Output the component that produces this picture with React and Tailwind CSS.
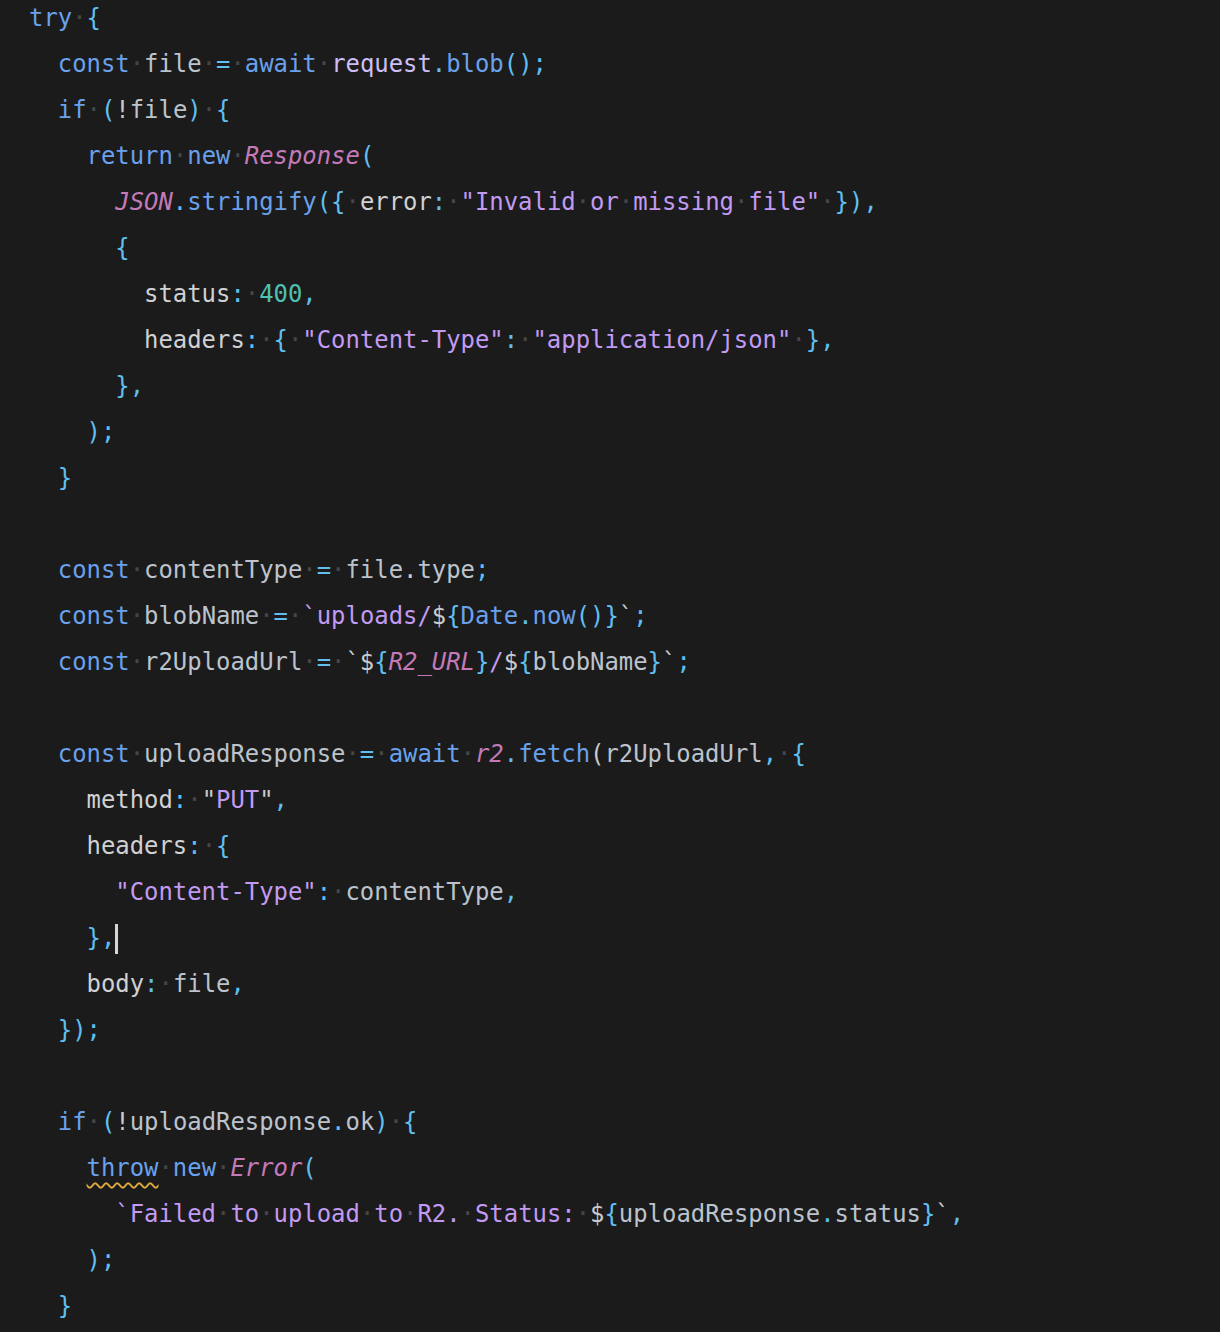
const C = {
  K: "text-[#6aa1ec]",
  P: "text-[#60bff0]",
  V: "text-[#bcc3cc]",
  R: "text-[#d0d1d3]",
  S: "text-[#c29af2]",
  T: "text-[#c47ab8] italic",
  N: "text-[#4fc1b1]",
  F: "text-[#6aa1ec]",
  L: "text-[#cdbff5]",
  W: "text-[#c9cbce]",
  Q: "text-[#6aa1ec] underline decoration-wavy decoration-[#dcaa3e] decoration-[1.5px] underline-offset-[6px]",
};

const _ = ["_", " "];

const LINES = [
  [0, [["K", "try"], _, ["P", "{"]]],
  [2, [["K", "const"], _, ["V", "file"], _, ["P", "="], _, ["K", "await"], _, ["L", "request"], ["P", "."], ["F", "blob"], ["P", "();"]]],
  [2, [["K", "if"], _, ["P", "("], ["W", "!"], ["V", "file"], ["P", ")"], _, ["P", "{"]]],
  [4, [["K", "return"], _, ["K", "new"], _, ["T", "Response"], ["P", "("]]],
  [6, [["T", "JSON"], ["P", "."], ["F", "stringify"], ["P", "({"], _, ["R", "error"], ["P", ":"], _, ["S", '"Invalid or missing file"'], _, ["P", "}),"]]],
  [6, [["P", "{"]]],
  [8, [["R", "status"], ["P", ":"], _, ["N", "400"], ["P", ","]]],
  [8, [["R", "headers"], ["P", ":"], _, ["P", "{"], _, ["S", '"Content-Type"'], ["P", ":"], _, ["S", '"application/json"'], _, ["P", "},"]]],
  [6, [["P", "},"]]],
  [4, [["P", ");"]]],
  [2, [["P", "}"]]],
  [0, []],
  [2, [["K", "const"], _, ["V", "contentType"], _, ["P", "="], _, ["V", "file"], ["W", "."], ["V", "type"], ["P", ";"]]],
  [2, [["K", "const"], _, ["V", "blobName"], _, ["P", "="], _, ["S", "`uploads/"], ["W", "$"], ["P", "{"], ["F", "Date"], ["P", "."], ["F", "now"], ["P", "()}"], ["W", "`"], ["P", ";"]]],
  [2, [["K", "const"], _, ["V", "r2UploadUrl"], _, ["P", "="], _, ["W", "`$"], ["P", "{"], ["T", "R2_URL"], ["P", "}"], ["S", "/"], ["W", "$"], ["P", "{"], ["V", "blobName"], ["P", "}"], ["W", "`"], ["P", ";"]]],
  [0, []],
  [2, [["K", "const"], _, ["V", "uploadResponse"], _, ["P", "="], _, ["K", "await"], _, ["T", "r2"], ["P", "."], ["F", "fetch"], ["W", "("], ["V", "r2UploadUrl"], ["P", ","], _, ["P", "{"]]],
  [4, [["R", "method"], ["P", ":"], _, ["W", '"'], ["S", "PUT"], ["W", '"'], ["P", ","]]],
  [4, [["R", "headers"], ["P", ":"], _, ["P", "{"]]],
  [6, [["S", '"Content-Type"'], ["P", ":"], _, ["V", "contentType"], ["P", ","]]],
  [4, [["P", "},"], ["CURSOR", ""]]],
  [4, [["R", "body"], ["P", ":"], _, ["V", "file"], ["P", ","]]],
  [2, [["P", "});"]]],
  [0, []],
  [2, [["K", "if"], _, ["P", "("], ["W", "!"], ["V", "uploadResponse"], ["P", "."], ["V", "ok"], ["P", ")"], _, ["P", "{"]]],
  [4, [["Q", "throw"], _, ["K", "new"], _, ["T", "Error"], ["P", "("]]],
  [6, [["S", "`Failed to upload to R2. Status: "], ["W", "$"], ["P", "{"], ["V", "uploadResponse"], ["P", "."], ["V", "status"], ["P", "}"], ["W", "`"], ["P", ","]]],
  [4, [["P", ");"]]],
  [2, [["P", "}"]]],
];

function Dot() {
  return <span className="text-[#474747]">·</span>;
}

function Token({ kind, text }) {
  if (kind === "_") return <Dot />;
  if (kind === "CURSOR")
    return <span className="inline-block h-[30px] w-[3px] bg-[#d6d6d6] align-middle" />;
  const parts = text.split(" ");
  return (
    <span className={C[kind]}>
      {parts.map((p, i) => (
        <span key={i}>
          {i > 0 && <Dot />}
          {p}
        </span>
      ))}
    </span>
  );
}

export default function App() {
  return (
    <div className="h-[1332px] w-[1220px] overflow-hidden bg-[#1b1b1b] font-['DejaVu_Sans_Mono',monospace] text-[23.9px]">
      <div className="mt-[-4px] flex flex-col pl-[29px]">
        {LINES.map(([indent, tokens], i) => (
          <div key={i} className="flex h-[46px] items-center whitespace-pre">
            <span>{" ".repeat(indent)}</span>
            {tokens.map(([kind, text], j) => (
              <Token key={j} kind={kind} text={text} />
            ))}
          </div>
        ))}
      </div>
    </div>
  );
}
